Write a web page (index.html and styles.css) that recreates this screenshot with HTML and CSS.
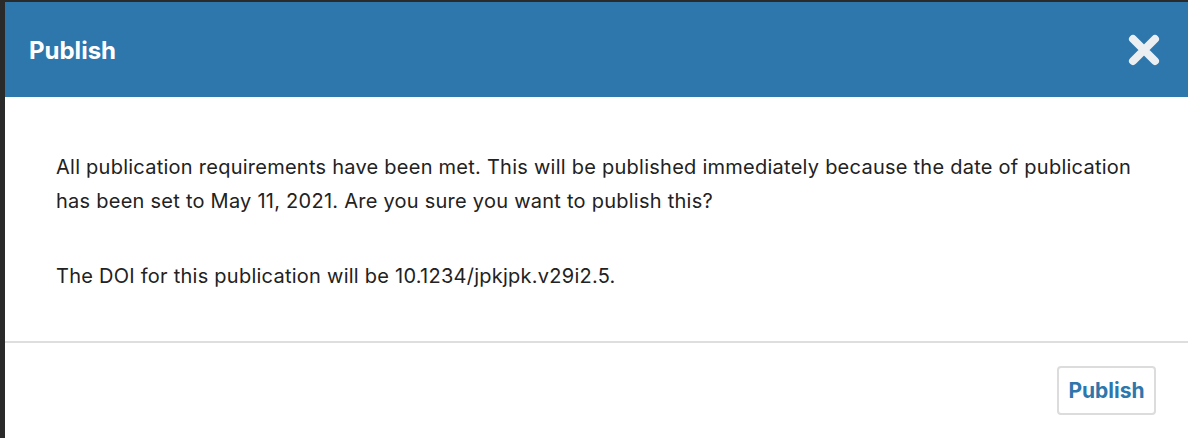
FILE: index.html
```html
<!DOCTYPE html>
<html>
<head>
<meta charset="utf-8">
<link rel="stylesheet" href="styles.css">
</head>
<body>
<div class="modal">
  <div class="modal-header">
    <h1 class="modal-title">Publish</h1>
    <button class="close" aria-label="Close">
      <svg width="34" height="34" viewBox="0 0 34 34"><path d="M6 6 L28 28 M28 6 L6 28" stroke="#eceff1" stroke-width="8" stroke-linecap="round"/></svg>
    </button>
  </div>
  <div class="modal-body">
    <p>All publication requirements have been met. This will be published immediately because the date of publication has been set to May 11, 2021. Are you sure you want to publish this?</p>
    <p>The DOI for this publication will be 10.1234/jpkjpk.v29i2.5.</p>
  </div>
  <div class="modal-footer">
    <button class="btn">Publish</button>
  </div>
</div>
</body>
</html>
```
FILE: styles.css
```css
html, body { margin: 0; padding: 0; }
body {
  background: #2a2a2a;
  width: 1188px;
  height: 438px;
  overflow: hidden;
  font-family: Inter, "Noto Sans", sans-serif;
}
.modal {
  margin: 2px 0 0 5px;
  background: #fff;
  height: 436px;
  overflow: hidden;
}
.modal-header {
  background: #2e77ad;
  height: 95px;
  display: flex;
  align-items: center;
  justify-content: space-between;
  padding: 0 27px 0 24px;
}
.modal-title {
  margin: 0;
  color: #fff;
  font-size: 24px;
  font-weight: 700;
  padding-top: 1px;
}
.close {
  background: none;
  border: 0;
  padding: 0;
  display: flex;
}
.modal-body {
  padding: 53px 48px 48px 51px;
  border-bottom: 2px solid #dedede;
  color: #222;
  font-size: 20px;
  letter-spacing: 0.25px;
  line-height: 34px;
}
.modal-body p { margin: 0; }
.modal-body p + p { margin-top: 41px; }
.modal-footer {
  display: flex;
  justify-content: flex-end;
  padding: 23px 32px 0 0;
}
.btn {
  font-family: inherit;
  background: #fff;
  border: 2px solid #dcdcdc;
  border-radius: 4px;
  color: #2e77ad;
  font-size: 21px;
  font-weight: 700;
  width: 99px;
  height: 49px;
  padding: 0;
}
```
